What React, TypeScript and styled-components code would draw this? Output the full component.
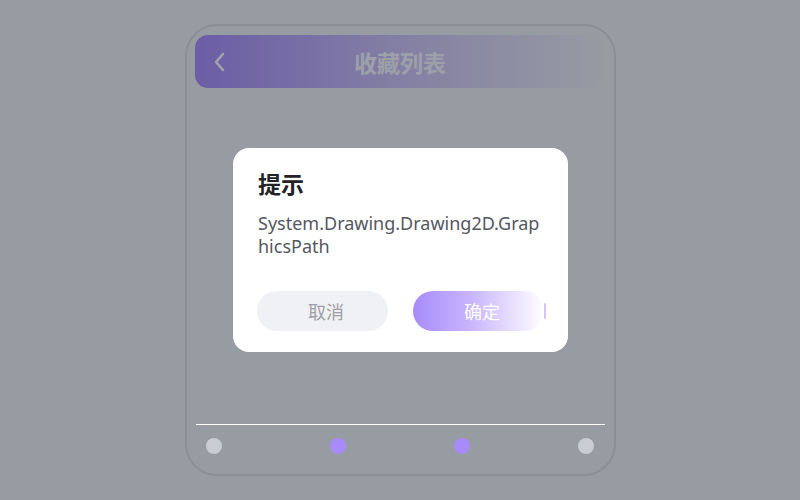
import React from "react";
import styled, { createGlobalStyle } from "styled-components";

const Global = createGlobalStyle`
  html, body { margin: 0; padding: 0; }
  body {
    width: 800px;
    height: 500px;
    overflow: hidden;
    background: #f1f2f4;
    font-family: "Noto Sans", "Noto Sans CJK SC", sans-serif;
  }
`;

const Page = styled.div`
  width: 800px;
  height: 500px;
  display: flex;
  justify-content: center;
  padding-top: 24px;
  padding-left: 1px;
  box-sizing: border-box;
`;

const Phone = styled.div`
  width: 431px;
  height: 452px;
  box-sizing: border-box;
  border: 2px solid #dcdde1;
  border-radius: 32px;
  padding: 9px 9px 0 8px;
  display: flex;
  flex-direction: column;
`;

const Header = styled.div`
  height: 53px;
  border-radius: 13px;
  background: linear-gradient(90deg, #a78bfa 0%, rgba(167, 139, 250, 0.45) 50%, rgba(241, 242, 244, 0) 100%);
  display: flex;
  align-items: center;
  position: relative;
`;

const Back = styled.div`
  width: 48px;
  display: flex;
  justify-content: center;
  color: #fff;
`;

const HeaderTitle = styled.div`
  position: absolute;
  left: 0;
  right: 0;
  text-align: center;
  font-family: "Noto Sans CJK SC", sans-serif;
  font-weight: 700;
  font-size: 23px;
  color: #fbfbff;
  pointer-events: none;
`;

const Body = styled.div`
  flex: 1;
`;

const Nav = styled.div`
  position: relative;
  z-index: 20;
  border-top: 1px solid #ffffff;
  margin: 0 0 0 1px;
  padding: 13px 11px 0 10px;
  height: 50px;
  box-sizing: border-box;
  display: flex;
  justify-content: space-between;
  align-items: flex-start;
`;

const Dot = styled.div<{ $active?: boolean }>`
  width: 16px;
  height: 16px;
  border-radius: 50%;
  background: ${(p) => (p.$active ? "#a78bfa" : "#c9ccd3")};
`;

const Overlay = styled.div`
  position: fixed;
  inset: 0;
  z-index: 10;
  background: rgba(17, 24, 39, 0.4);
`;

const Dialog = styled.div`
  position: fixed;
  z-index: 30;
  left: 233px;
  top: 148px;
  width: 335px;
  box-sizing: border-box;
  background: #ffffff;
  border-radius: 16px;
  padding: 20px 24px 21px 24px;
`;

const DialogTitle = styled.div`
  font-family: "Noto Sans CJK SC", sans-serif;
  font-weight: 700;
  font-size: 23px;
  line-height: 30px;
  color: #222326;
  padding-left: 1px;
`;

const DialogText = styled.div`
  margin-top: 14px;
  font-size: 18px;
  line-height: 23px;
  color: #54575e;
  padding-left: 1px;
  word-break: break-all;
`;

const Buttons = styled.div`
  margin-top: 33px;
  display: flex;
  justify-content: space-between;
`;

const Btn = styled.button<{ $primary?: boolean }>`
  position: relative;
  width: 131px;
  height: 40px;
  border: none;
  border-radius: 20px;
  font-family: "Noto Sans CJK SC", sans-serif;
  font-size: 18px;
  padding: 0 0 0 7px;
  cursor: pointer;
  color: ${(p) => (p.$primary ? "#ffffff" : "#9fa0a6")};
  background: ${(p) =>
    p.$primary ? "linear-gradient(90deg, #a78bfa 0%, #c9b6fd 45%, #ffffff 100%)" : "#f0f1f4"};
  ${(p) =>
    p.$primary
      ? `&::after {
    content: "";
    position: absolute;
    right: -2px;
    top: 12px;
    width: 2px;
    height: 16px;
    border-radius: 1px;
    background: #d2c4fd;
  }`
      : ""}
`;

export default function App() {
  return (
    <>
      <Global />
      <Page>
        <Phone>
          <Header>
            <Back>
              <svg width="14" height="22" viewBox="0 0 14 22" fill="none">
                <path d="M11 3 L4 11 L11 19" stroke="currentColor" strokeWidth="2.6" strokeLinecap="round" strokeLinejoin="round" />
              </svg>
            </Back>
            <HeaderTitle>收藏列表</HeaderTitle>
          </Header>
          <Body />
          <Nav>
            <Dot />
            <Dot $active />
            <Dot $active />
            <Dot />
          </Nav>
        </Phone>
      </Page>
      <Overlay />
      <Dialog>
        <DialogTitle>提示</DialogTitle>
        <DialogText>System.Drawing.Drawing2D.GraphicsPath</DialogText>
        <Buttons>
          <Btn>取消</Btn>
          <Btn $primary>确定</Btn>
        </Buttons>
      </Dialog>
    </>
  );
}
